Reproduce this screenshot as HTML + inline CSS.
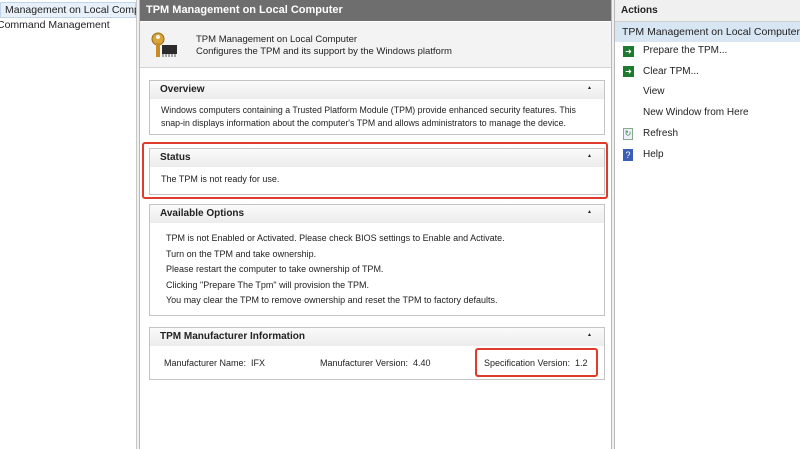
<!DOCTYPE html>
<html><head><style>
*{margin:0;padding:0;box-sizing:border-box}
body{width:800px;height:449px;overflow:hidden;background:#f0f0f0;font-family:"Liberation Sans",sans-serif;position:relative;color:#222}
.abs{position:absolute}
div{white-space:nowrap}
.left{left:0;top:0;width:137px;height:449px;background:#fff;border-right:1px solid #c8c8c8;font-size:11px;overflow:hidden}
.center{left:139px;top:0;width:473px;height:449px;background:#fff;border-left:1px solid #b8b8b8;border-right:1px solid #b8b8b8}
.hdr{left:0;top:0;width:100%;height:21px;background:#6e6e6e;color:#fff;font-size:11px;font-weight:bold;padding:4px 6px}
.top{left:0;top:22px;width:100%;height:46px;background:#f3f3f3;border-bottom:1px solid #d4d4d4;font-size:9.5px;line-height:12px}
.sec{position:absolute;left:9px;width:456px;border:1px solid #c4c4c4;background:#fff;font-size:9px}
.sh{height:18px;background:linear-gradient(#fafafa,#ececec);font-weight:bold;font-size:10px;padding:3px 10px;position:relative}
.sh:after{content:"▲";position:absolute;right:12px;top:4px;font-size:5px}
.right{left:614px;top:0;width:186px;height:449px;background:#fff;border-left:1px solid #b8b8b8;font-size:10px;overflow:hidden}
.it{position:absolute;left:28px}
.red{position:absolute;border:2.5px solid #e03a2c;border-radius:3px}
</style></head><body>
<div class="abs left">
<div style="position:absolute;left:0;top:2px;width:136px;height:16px;background:#e8f0fa;border:1px solid #c0d4ec;padding-left:4px;padding-top:1px;font-size:10.5px">Management on Local Comp</div>
<div style="position:absolute;left:-3px;top:19px;font-size:10.5px">Command Management</div>
</div>
<div class="abs center">
<div class="abs hdr">TPM Management on Local Computer</div>
<div class="abs top">
<svg style="position:absolute;left:9px;top:9px" width="30" height="30" viewBox="0 0 30 30"><circle cx="9" cy="8" r="6" fill="#d9a53a" stroke="#9a6a10"/><circle cx="9" cy="6" r="2" fill="#f3f3f3"/><rect x="7" y="12" width="4" height="14" fill="#c98e22"/><rect x="13" y="14" width="15" height="9" fill="#2b2b2b"/><path d="M14 23v3M17 23v3M20 23v3M23 23v3M26 23v3" stroke="#555"/></svg>
<div style="position:absolute;left:56px;top:12px">TPM Management on Local Computer<br>Configures the TPM and its support by the Windows platform</div>
</div>
<div class="sec" style="top:80px;height:55px"><div class="sh">Overview</div><div style="padding:5px 11px;line-height:13px;font-size:8.8px">Windows computers containing a Trusted Platform Module (TPM) provide enhanced security features. This<br>snap-in displays information about the computer's TPM and allows administrators to manage the device.</div></div>
<div class="sec" style="top:148px;height:47px"><div class="sh">Status</div><div style="padding:7px 11px">The TPM is not ready for use.</div></div>
<div class="sec" style="top:204px;height:112px"><div class="sh">Available Options</div><div style="padding:8px 16px;line-height:15.5px">TPM is not Enabled or Activated. Please check BIOS settings to Enable and Activate.<br>Turn on the TPM and take ownership.<br>Please restart the computer to take ownership of TPM.<br>Clicking "Prepare The Tpm" will provision the TPM.<br>You may clear the TPM to remove ownership and reset the TPM to factory defaults.</div></div>
<div class="sec" style="top:327px;height:53px"><div class="sh">TPM Manufacturer Information</div>
<div style="position:absolute;left:14px;top:30px">Manufacturer Name:&nbsp; IFX</div>
<div style="position:absolute;left:170px;top:30px">Manufacturer Version:&nbsp; 4.40</div>
<div style="position:absolute;left:334px;top:30px">Specification Version:&nbsp; 1.2</div></div>
<div class="red" style="left:2px;top:142px;width:466px;height:57px"></div>
<div class="red" style="left:335px;top:348px;width:123px;height:29px"></div>
</div>
<div class="abs right">
<div style="position:absolute;left:0;top:0;width:186px;height:22px;background:#f0f0f0;border-bottom:1px solid #d0d0d0;font-weight:bold;padding:5px 6px">Actions</div>
<div style="position:absolute;left:0;top:22px;width:186px;height:20px;background:#d8e6f4;padding:4px 7px;font-size:10.5px">TPM Management on Local Computer</div>
<div style="position:absolute;left:8px;top:46px;width:11px;height:11px;background:#1e7a2e;color:#fff;font-size:8px;text-align:center;line-height:11px">➜</div>
<div class="it" style="top:45px">Prepare the TPM...</div>
<div style="position:absolute;left:8px;top:66px;width:11px;height:11px;background:#1e7a2e;color:#fff;font-size:8px;text-align:center;line-height:11px">➜</div>
<div class="it" style="top:66px">Clear TPM...</div>
<div class="it" style="top:86px">View</div>
<div class="it" style="top:107px">New Window from Here</div>
<div style="position:absolute;left:8px;top:128px;width:10px;height:12px;border:1px solid #8a8;background:#eef;color:#2a8a3a;font-size:8px;text-align:center">↻</div>
<div class="it" style="top:128px">Refresh</div>
<div style="position:absolute;left:8px;top:149px;width:10px;height:12px;background:#3b5fb8;color:#fff;font-size:9px;text-align:center;line-height:12px">?</div>
<div class="it" style="top:149px">Help</div>
</div>
</body></html>
